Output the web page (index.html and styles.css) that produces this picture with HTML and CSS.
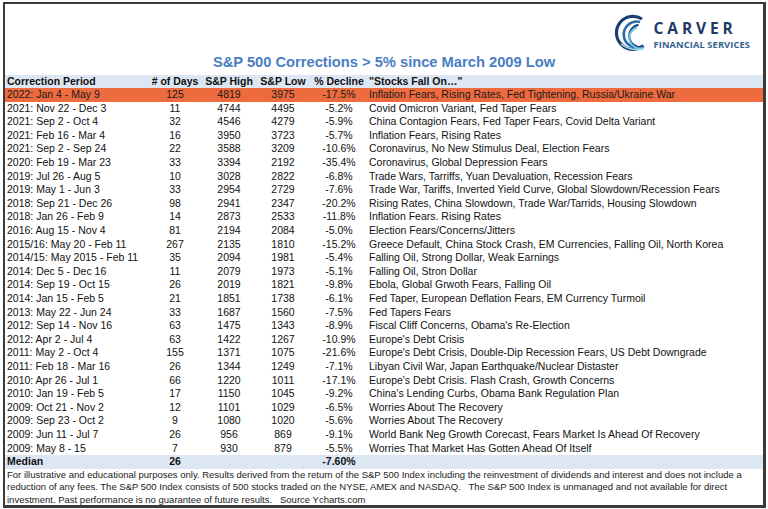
FILE: index.html
```html
<!DOCTYPE html>
<html lang="en">
<head>
<meta charset="utf-8">
<title>S&amp;P 500 Corrections</title>
<link rel="stylesheet" href="styles.css">
</head>
<body>
<div class="frame">
  <div class="top">
    <div class="brand">
      <svg class="mark" viewBox="0 0 32 38" width="32" height="38" aria-hidden="true">
        <path d="M29 5 A16.5 16.5 0 1 0 30.5 31.5" fill="none" stroke="#1c3f72" stroke-width="3.2"/>
        <path d="M27 8 A13 13 0 1 0 30 32" fill="none" stroke="#2c6aa8" stroke-width="2.6"/>
        <path d="M25.5 10.8 A10 10 0 1 0 29.5 33" fill="none" stroke="#1c3f72" stroke-width="2"/>
        <path d="M24 13.5 A7.2 7.2 0 1 0 30 34" fill="none" stroke="#6fc0e8" stroke-width="2"/>
        <path d="M8 30 Q17 37.5 31 35" fill="none" stroke="#a8ddf3" stroke-width="1.5"/>
      </svg>
      <div class="brand-text">
        <div class="brand-name">CARVER</div>
        <div class="brand-sub">FINANCIAL SERVICES</div>
      </div>
    </div>
    <h1 class="title">S&amp;P 500 Corrections &gt; 5% since March 2009 Low</h1>
  </div>

  <div class="table">
    <div class="row head">
      <div class="c-period">Correction Period</div>
      <div class="c-num"># of Days</div>
      <div class="c-num">S&amp;P High</div>
      <div class="c-num">S&amp;P Low</div>
      <div class="c-num">% Decline</div>
      <div class="c-why">"Stocks Fall On…"</div>
    </div>
    <div class="row hl"><div class="c-period">2022: Jan 4 - May 9</div><div class="c-num">125</div><div class="c-num">4819</div><div class="c-num">3975</div><div class="c-num">-17.5%</div><div class="c-why">Inflation Fears, Rising Rates, Fed Tightening, Russia/Ukraine War</div></div>
    <div class="row"><div class="c-period">2021: Nov 22 - Dec 3</div><div class="c-num">11</div><div class="c-num">4744</div><div class="c-num">4495</div><div class="c-num">-5.2%</div><div class="c-why">Covid Omicron Variant, Fed Taper Fears</div></div>
    <div class="row"><div class="c-period">2021: Sep 2 - Oct 4</div><div class="c-num">32</div><div class="c-num">4546</div><div class="c-num">4279</div><div class="c-num">-5.9%</div><div class="c-why">China Contagion Fears, Fed Taper Fears, Covid Delta Variant</div></div>
    <div class="row"><div class="c-period">2021: Feb 16 - Mar 4</div><div class="c-num">16</div><div class="c-num">3950</div><div class="c-num">3723</div><div class="c-num">-5.7%</div><div class="c-why">Inflation Fears, Rising Rates</div></div>
    <div class="row"><div class="c-period">2021: Sep 2 - Sep 24</div><div class="c-num">22</div><div class="c-num">3588</div><div class="c-num">3209</div><div class="c-num">-10.6%</div><div class="c-why">Coronavirus, No New Stimulus Deal, Election Fears</div></div>
    <div class="row"><div class="c-period">2020: Feb 19 - Mar 23</div><div class="c-num">33</div><div class="c-num">3394</div><div class="c-num">2192</div><div class="c-num">-35.4%</div><div class="c-why">Coronavirus, Global Depression Fears</div></div>
    <div class="row"><div class="c-period">2019: Jul 26 - Aug 5</div><div class="c-num">10</div><div class="c-num">3028</div><div class="c-num">2822</div><div class="c-num">-6.8%</div><div class="c-why">Trade Wars, Tarriffs, Yuan Devaluation, Recession Fears</div></div>
    <div class="row"><div class="c-period">2019: May 1 - Jun 3</div><div class="c-num">33</div><div class="c-num">2954</div><div class="c-num">2729</div><div class="c-num">-7.6%</div><div class="c-why">Trade War, Tariffs, Inverted Yield Curve, Global Slowdown/Recession Fears</div></div>
    <div class="row"><div class="c-period">2018: Sep 21 - Dec 26</div><div class="c-num">98</div><div class="c-num">2941</div><div class="c-num">2347</div><div class="c-num">-20.2%</div><div class="c-why">Rising Rates, China Slowdown, Trade War/Tarrids, Housing Slowdown</div></div>
    <div class="row"><div class="c-period">2018: Jan 26 - Feb 9</div><div class="c-num">14</div><div class="c-num">2873</div><div class="c-num">2533</div><div class="c-num">-11.8%</div><div class="c-why">Inflation Fears. Rising Rates</div></div>
    <div class="row"><div class="c-period">2016: Aug 15 - Nov 4</div><div class="c-num">81</div><div class="c-num">2194</div><div class="c-num">2084</div><div class="c-num">-5.0%</div><div class="c-why">Election Fears/Concerns/Jitters</div></div>
    <div class="row"><div class="c-period">2015/16: May 20 - Feb 11</div><div class="c-num">267</div><div class="c-num">2135</div><div class="c-num">1810</div><div class="c-num">-15.2%</div><div class="c-why">Greece Default, China Stock Crash, EM Currencies, Falling Oil, North Korea</div></div>
    <div class="row"><div class="c-period">2014/15: May 2015 - Feb 11</div><div class="c-num">35</div><div class="c-num">2094</div><div class="c-num">1981</div><div class="c-num">-5.4%</div><div class="c-why">Falling Oil, Strong Dollar, Weak Earnings</div></div>
    <div class="row"><div class="c-period">2014: Dec 5 - Dec 16</div><div class="c-num">11</div><div class="c-num">2079</div><div class="c-num">1973</div><div class="c-num">-5.1%</div><div class="c-why">Falling Oil, Stron Dollar</div></div>
    <div class="row"><div class="c-period">2014: Sep 19 - Oct 15</div><div class="c-num">26</div><div class="c-num">2019</div><div class="c-num">1821</div><div class="c-num">-9.8%</div><div class="c-why">Ebola, Global Grwoth Fears, Falling Oil</div></div>
    <div class="row"><div class="c-period">2014: Jan 15 - Feb 5</div><div class="c-num">21</div><div class="c-num">1851</div><div class="c-num">1738</div><div class="c-num">-6.1%</div><div class="c-why">Fed Taper, European Deflation Fears, EM Currency Turmoil</div></div>
    <div class="row"><div class="c-period">2013: May 22 - Jun 24</div><div class="c-num">33</div><div class="c-num">1687</div><div class="c-num">1560</div><div class="c-num">-7.5%</div><div class="c-why">Fed Tapers Fears</div></div>
    <div class="row"><div class="c-period">2012: Sep 14 - Nov 16</div><div class="c-num">63</div><div class="c-num">1475</div><div class="c-num">1343</div><div class="c-num">-8.9%</div><div class="c-why">Fiscal Cliff Concerns, Obama's Re-Election</div></div>
    <div class="row"><div class="c-period">2012: Apr 2 - Jul 4</div><div class="c-num">63</div><div class="c-num">1422</div><div class="c-num">1267</div><div class="c-num">-10.9%</div><div class="c-why">Europe's Debt Crisis</div></div>
    <div class="row"><div class="c-period">2011: May 2 - Oct 4</div><div class="c-num">155</div><div class="c-num">1371</div><div class="c-num">1075</div><div class="c-num">-21.6%</div><div class="c-why">Europe's Debt Crisis, Double-Dip Recession Fears, US Debt Downgrade</div></div>
    <div class="row"><div class="c-period">2011: Feb 18 - Mar 16</div><div class="c-num">26</div><div class="c-num">1344</div><div class="c-num">1249</div><div class="c-num">-7.1%</div><div class="c-why">Libyan Civil War, Japan Earthquake/Nuclear Distaster</div></div>
    <div class="row"><div class="c-period">2010: Apr 26 - Jul 1</div><div class="c-num">66</div><div class="c-num">1220</div><div class="c-num">1011</div><div class="c-num">-17.1%</div><div class="c-why">Europe's Debt Crisis. Flash Crash, Growth Concerns</div></div>
    <div class="row"><div class="c-period">2010: Jan 19 - Feb 5</div><div class="c-num">17</div><div class="c-num">1150</div><div class="c-num">1045</div><div class="c-num">-9.2%</div><div class="c-why">China's Lending Curbs, Obama Bank Regulation Plan</div></div>
    <div class="row"><div class="c-period">2009: Oct 21 - Nov 2</div><div class="c-num">12</div><div class="c-num">1101</div><div class="c-num">1029</div><div class="c-num">-6.5%</div><div class="c-why">Worries About The Recovery</div></div>
    <div class="row"><div class="c-period">2009: Sep 23 - Oct 2</div><div class="c-num">9</div><div class="c-num">1080</div><div class="c-num">1020</div><div class="c-num">-5.6%</div><div class="c-why">Worries About The Recovery</div></div>
    <div class="row"><div class="c-period">2009: Jun 11 - Jul 7</div><div class="c-num">26</div><div class="c-num">956</div><div class="c-num">869</div><div class="c-num">-9.1%</div><div class="c-why">World Bank Neg Growth Corecast, Fears Market Is Ahead Of Recovery</div></div>
    <div class="row"><div class="c-period">2009: May 8 - 15</div><div class="c-num">7</div><div class="c-num">930</div><div class="c-num">879</div><div class="c-num">-5.5%</div><div class="c-why">Worries That Market Has Gotten Ahead Of Itself</div></div>
    <div class="row median"><div class="c-period">Median</div><div class="c-num">26</div><div class="c-num"></div><div class="c-num"></div><div class="c-num">-7.60%</div><div class="c-why"></div></div>
  </div>

  <p class="note">For illustrative and educational purposes only. Results derived from the return of the S&amp;P 500 Index including the reinvestment of dividends and interest and does not include a<br>reduction of any fees. The S&amp;P 500 Index consists of 500 stocks traded on the NYSE, AMEX and NASDAQ.&nbsp;&nbsp; The S&amp;P 500 Index is unmanaged and not available for direct<br>investment. Past performance is no guarantee of future results.&nbsp;&nbsp; Source Ycharts.com</p>
</div>
</body>
</html>
```

FILE: styles.css
```css
html, body {
  margin: 0;
  padding: 0;
  background: #ffffff;
}

body {
  font-family: "Liberation Sans", Arial, sans-serif;
  color: #111111;
}

.frame {
  box-sizing: border-box;
  width: 763px;
  height: 506px;
  margin: 2px 0 0 3px;
  border: 2px solid #3a3a3a;
  border-right-width: 3px;
  border-bottom-width: 3px;
  display: flex;
  flex-direction: column;
}

.top {
  height: 70.5px;
  display: flex;
  flex-direction: column;
  flex-shrink: 0;
}

.brand {
  align-self: flex-end;
  display: flex;
  align-items: center;
  gap: 9px;
  margin: 9px 13px 0 0;
  height: 40px;
}

.mark {
  display: block;
}

.brand-text {
  display: flex;
  flex-direction: column;
  gap: 2px;
  padding-top: 3px;
}

.brand-name {
  font-family: "Open Sans", "DejaVu Sans", sans-serif;
  font-weight: 700;
  font-size: 15.5px;
  line-height: 17px;
  letter-spacing: 3.9px;
  color: #1e3a64;
}

.brand-sub {
  font-family: "Open Sans", "DejaVu Sans", sans-serif;
  font-weight: 700;
  font-size: 9.3px;
  line-height: 11px;
  letter-spacing: 0.1px;
  color: #35648f;
}

.title {
  margin: 0;
  text-align: center;
  font-size: 14.7px;
  line-height: 18px;
  font-weight: 700;
  color: #4a7ec2;
}

.table {
  display: flex;
  flex-direction: column;
  flex-shrink: 0;
}

.row {
  display: grid;
  grid-template-columns: 143px 54px 54px 54px 58px 1fr;
  height: 13.6px;
  line-height: 13.6px;
  font-size: 10.5px;
  white-space: nowrap;
}

.c-period {
  padding-left: 2px;
}

.c-num {
  text-align: center;
}

.c-why {
  padding-left: 1px;
}

.head {
  background: #dde6f3;
  font-weight: 700;
}

.hl {
  background: #ed6b3f;
  color: #1a1a1a;
}

.median {
  background: #dde6f3;
  font-weight: 700;
}

.note {
  margin: 0;
  padding: 0 0 0 2px;
  font-size: 9.5px;
  line-height: 12.6px;
  white-space: nowrap;
  color: #1a1a1a;
}
```
